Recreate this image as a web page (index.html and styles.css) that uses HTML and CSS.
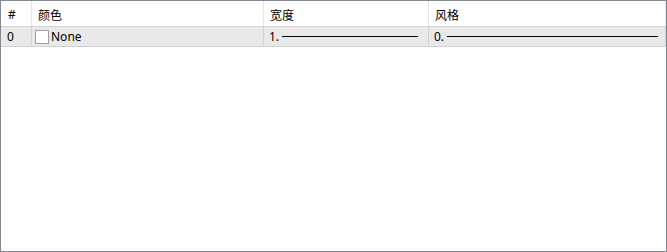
FILE: index.html
```html
<!DOCTYPE html>
<html>
<head>
<meta charset="utf-8">
<link rel="stylesheet" href="styles.css">
</head>
<body>
<div class="grid">
  <div class="head">
    <div class="hc c1">#</div>
    <div class="hc c2">颜色</div>
    <div class="hc c3">宽度</div>
    <div class="hc c4">风格</div>
  </div>
  <div class="row">
    <div class="rc c1">0</div>
    <div class="rc c2"><span class="chk"></span>None</div>
    <div class="rc c3"><span class="num">1.</span><span class="line"></span></div>
    <div class="rc c4"><span class="num">0.</span><span class="line"></span></div>
  </div>
</div>
</body>
</html>
```
FILE: styles.css
```css
html, body {
  margin: 0;
  padding: 0;
  background: #ffffff;
}
.grid {
  width: 667px;
  height: 252px;
  box-sizing: border-box;
  border: 1px solid #828790;
  font-family: "Noto Sans", "Noto Sans CJK SC", sans-serif;
  font-size: 12px;
  color: #000;
}
.head, .row {
  display: grid;
  grid-template-columns: 31px 232px 165px 1fr;
}
.head {
  height: 25px;
  border-bottom: 1px solid #d5d5d5;
}
.hc {
  border-right: 1px solid #e5e5e5;
  display: flex;
  align-items: center;
  padding-left: 6px;
  padding-top: 1px;
  font-family: "Noto Sans CJK SC", sans-serif;
}
.hc.c1 { padding-left: 7px; font-family: "Noto Sans", sans-serif; }
.hc.c4 { border-right: 1px solid #e5e5e5; }
.row {
  height: 19px;
  background: #e9e9e9;
  border-bottom: 1px solid #d0d0d0;
}
.rc {
  border-right: 1px solid #d0d0d0;
  display: flex;
  align-items: center;
  padding-left: 5px;
}
.rc.c1 { padding-left: 6px; }
.rc.c2 { padding-left: 3px; }
.chk {
  width: 12px;
  height: 12px;
  border: 1px solid #a0a0a0;
  background: #fff;
  margin-right: 2px;
}
.num { margin-right: 3px; }
.line {
  flex: 1;
  height: 1px;
  background: #000;
  margin-right: 10px;
}
.rc.c4 .line { margin-right: 7px; }
```
